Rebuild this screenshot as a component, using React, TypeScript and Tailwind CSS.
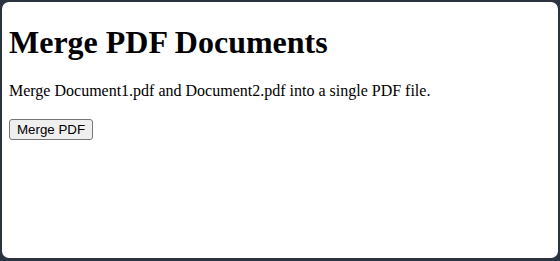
import React from "react";

export default function App() {
  return (
    <div className="h-[261px] w-[560px] bg-[#2b3340] p-[2px] pb-[3px]">
      <div
        className="flow-root h-full w-full overflow-hidden rounded-[7px] bg-white px-[7px] text-black"
        style={{ fontFamily: '"Liberation Serif", "Times New Roman", serif' }}
      >
        <h1 className="mt-[22px] mb-[21.44px] text-[32px] font-bold leading-[36.8px]">Merge PDF Documents</h1>
        <p className="m-0 text-[16px] leading-[18.4px]">Merge Document1.pdf and Document2.pdf into a single PDF file.</p>
        <div className="mt-[18.4px] flex">
          <button
            className="h-[21px] rounded-[3px] border border-[#767676] bg-[#efefef] px-[7px] py-[2px] text-[13.33px] leading-[15px] text-black"
            style={{ fontFamily: '"Liberation Sans", Arial, sans-serif' }}
          >
            Merge PDF
          </button>
        </div>
      </div>
    </div>
  );
}
